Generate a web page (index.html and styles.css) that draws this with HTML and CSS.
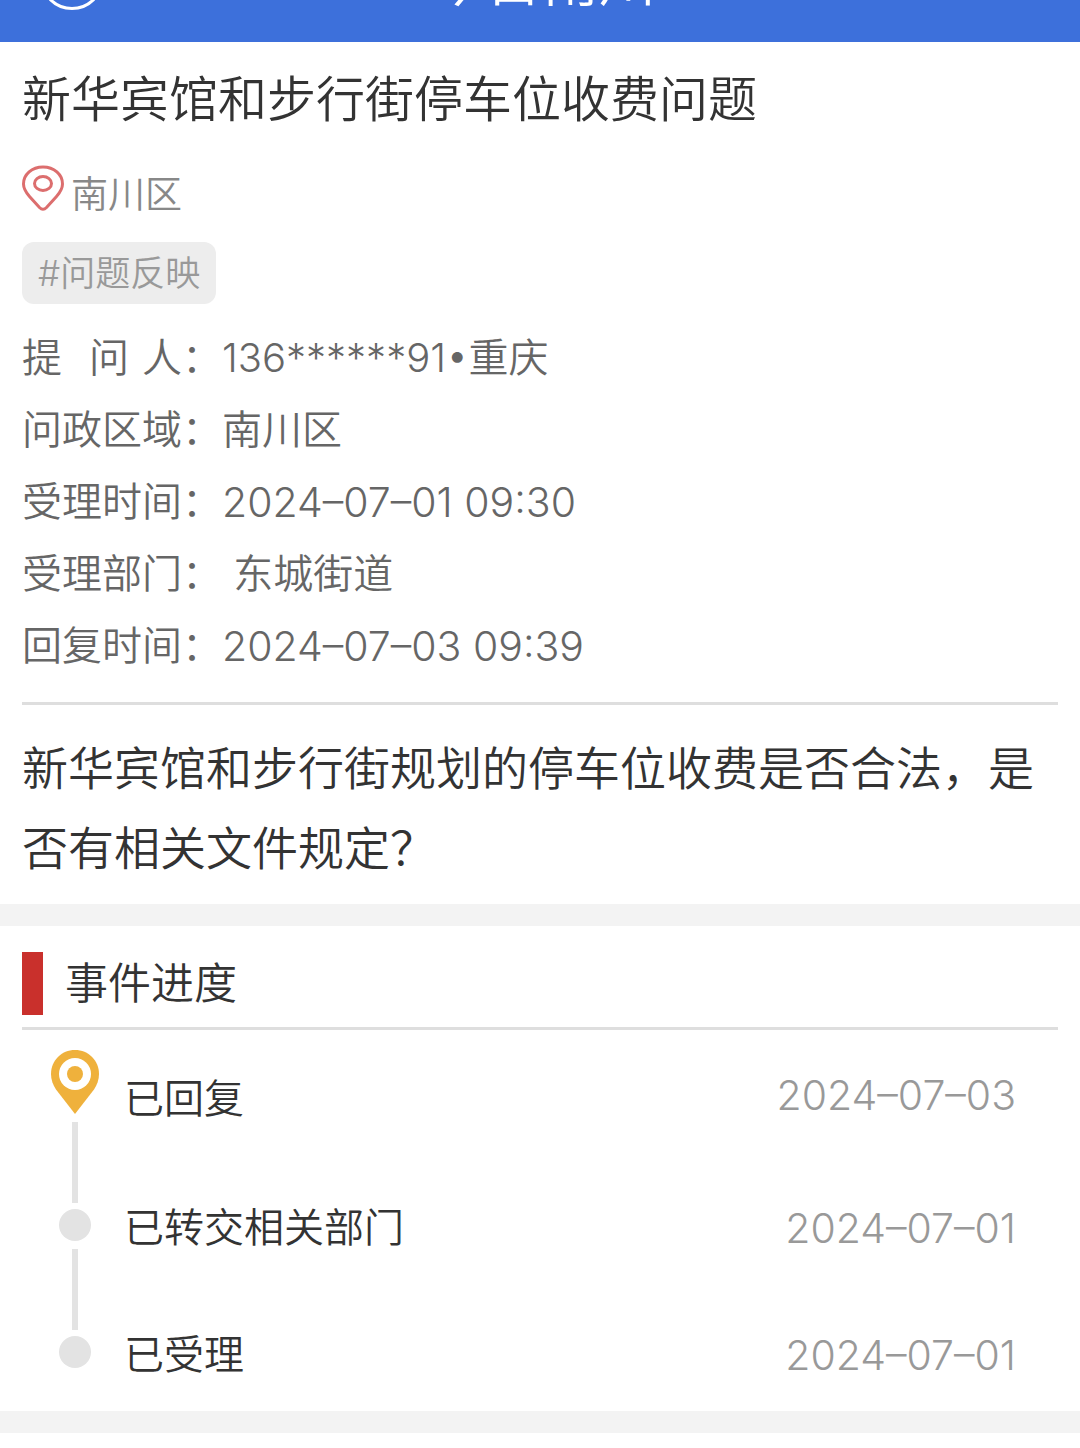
FILE: index.html
```html
<!DOCTYPE html>
<html lang="zh-CN">
<head>
    <meta charset="UTF-8">
    <meta name="viewport" content="width=device-width, initial-scale=1.0">
    <title>新华宾馆和步行街停车位收费问题</title>
    <link rel="stylesheet" href="styles.css">
</head>
<body>
    <header class="topbar">
        <button class="back-btn" type="button" aria-label="返回">
            <svg viewBox="0 0 24 24" width="30" height="30" fill="none" stroke="currentColor" stroke-width="2"><path d="M15 4L7 12L15 20"/></svg>
        </button>
        <div class="topbar-title">今日南川</div>
    </header>

    <main>
        <section class="question">
            <h1 class="title">新华宾馆和步行街停车位收费问题</h1>
            <div class="location">
                <svg class="location-icon" viewBox="0 0 42 46" fill="none" stroke="#dc6e6e" stroke-width="3">
                    <path d="M21 2C10 2 1.500 9.500 1.500 19C1.500 24 4 27.500 7.500 31.500L17.500 42.500Q21 46 24.500 42.500L34.500 31.500C38 27.500 40.500 24 40.500 19C40.500 9.500 32 2 21 2Z"/>
                    <ellipse cx="21" cy="18.500" rx="8.500" ry="7"/>
                </svg>
                <span>南川区</span>
            </div>
            <a class="tag" href="#">#问题反映</a>
            <dl class="info">
                <div class="info-row"><dt class="spread"><span>提</span><span>问</span><span>人：</span></dt><dd>136******91•重庆</dd></div>
                <div class="info-row"><dt>问政区域：</dt><dd>南川区</dd></div>
                <div class="info-row"><dt>受理时间：</dt><dd><time datetime="2024-07-01T09:30">2024–07–01 09:30</time></dd></div>
                <div class="info-row"><dt>受理部门：</dt><dd>&nbsp;东城街道</dd></div>
                <div class="info-row"><dt>回复时间：</dt><dd><time datetime="2024-07-03T09:39">2024–07–03 09:39</time></dd></div>
            </dl>
            <p class="content">新华宾馆和步行街规划的停车位收费是否合法，是否有相关文件规定？</p>
        </section>

        <section class="progress">
            <h2 class="progress-title">事件进度</h2>
            <ol class="timeline">
                <li class="step current">
                    <div class="marker">
                        <svg class="pin" viewBox="0 0 48 64">
                            <path fill="#efb13c" d="M24 0C10.500 0 0 10.500 0 24C0 30 2 35 5 39.500L24 64L43 39.500C46 35 48 30 48 24C48 10.500 37.500 0 24 0Z"/>
                            <circle cx="24" cy="24" r="16" fill="#fff"/>
                            <circle cx="24" cy="24" r="8" fill="#efb13c"/>
                        </svg>
                        <i class="line"></i>
                    </div>
                    <span class="step-name">已回复</span>
                    <time datetime="2024-07-03">2024–07–03</time>
                </li>
                <li class="step">
                    <div class="marker"><i class="dot"></i><i class="line"></i></div>
                    <span class="step-name">已转交相关部门</span>
                    <time datetime="2024-07-01">2024–07–01</time>
                </li>
                <li class="step">
                    <div class="marker"><i class="dot"></i></div>
                    <span class="step-name">已受理</span>
                    <time datetime="2024-07-01">2024–07–01</time>
                </li>
            </ol>
        </section>
    </main>
</body>
</html>
```
FILE: styles.css
```css
* {
    box-sizing: border-box;
}
body {
    margin: 0;
    background-color: #fff;
    color: #333;
    font-family: Inter, "Noto Sans CJK SC", sans-serif;
    font-weight: 350;
}
h1, h2, p, dl, dd, ol {
    margin: 0;
    padding: 0;
    font-weight: 350;
}

/* top bar */
.topbar {
    display: flex;
    align-items: flex-end;
    height: 42px;
    padding: 0 100px 32px 40px;
    background-color: #3d70db;
    color: #fff;
    overflow: hidden;
}
.back-btn {
    display: flex;
    align-items: center;
    justify-content: center;
    flex: none;
    width: 64px;
    height: 64px;
    padding: 0;
    border: 3px solid #fff;
    border-radius: 50%;
    background: none;
    color: #fff;
}
.topbar-title {
    flex: 1;
    padding-bottom: 1px;
    text-align: center;
    font-size: 57px;
    line-height: 57px;
}

/* question */
.question {
    padding: 18px 22px 16px;
}
.title {
    font-size: 49px;
    line-height: 80px;
}
.location {
    display: flex;
    align-items: flex-start;
    gap: 7px;
    margin-top: 25px;
    color: #888;
    font-size: 37px;
    line-height: 60px;
}
.location-icon {
    width: 42px;
    height: 46px;
}
.tag {
    display: block;
    width: fit-content;
    margin-top: 17px;
    padding: 0 16px;
    border-radius: 12px;
    background-color: #ededed;
    color: #999;
    font-size: 35px;
    line-height: 62px;
    text-decoration: none;
}
.info {
    margin-top: 18px;
    padding-bottom: 20px;
    border-bottom: 3px solid #dedede;
    color: #666;
    font-size: 40px;
    line-height: 72px;
}
.info-row {
    display: flex;
}
.info-row dt {
    width: 200px;
    flex: none;
}
.info-row .spread {
    display: flex;
    gap: 13px;
}
.spread span:first-child {
    margin-right: 14px;
}
time {
    display: block;
    font-size: 41px;
}
.content {
    margin-top: 23px;
    font-size: 46px;
    line-height: 80px;
}

/* progress */
.progress {
    padding: 26px 22px 43px;
    border-top: 22px solid #f3f3f3;
    border-bottom: 22px solid #f3f3f3;
}
.progress-title {
    display: flex;
    gap: 22px;
    padding-bottom: 12px;
    border-bottom: 3px solid #dedede;
    font-size: 43px;
    line-height: 63px;
}
.progress-title::before {
    content: "";
    width: 21px;
    background-color: #c9302c;
}
.timeline {
    display: flex;
    flex-direction: column;
    gap: 6px;
    padding: 20px 42px 0 28px;
    list-style: none;
}
.step {
    display: flex;
    align-items: flex-start;
    font-size: 40px;
    line-height: 38px;
}
.current .step-name {
    padding-top: 30px;
}
.current time {
    padding-top: 26px;
}
.marker {
    display: flex;
    flex-direction: column;
    align-items: center;
    gap: 8px;
    width: 50px;
    margin-right: 24px;
}
.pin {
    width: 48px;
    height: 64px;
}
.dot {
    width: 32px;
    height: 32px;
    border-radius: 50%;
    background-color: #e3e3e3;
}
.line {
    width: 6px;
    height: 81px;
    background-color: #e3e3e3;
}
.step:last-child {
    height: 32px;
}
.step-name {
    flex: 1;
}
.step time {
    color: #999;
}
```
